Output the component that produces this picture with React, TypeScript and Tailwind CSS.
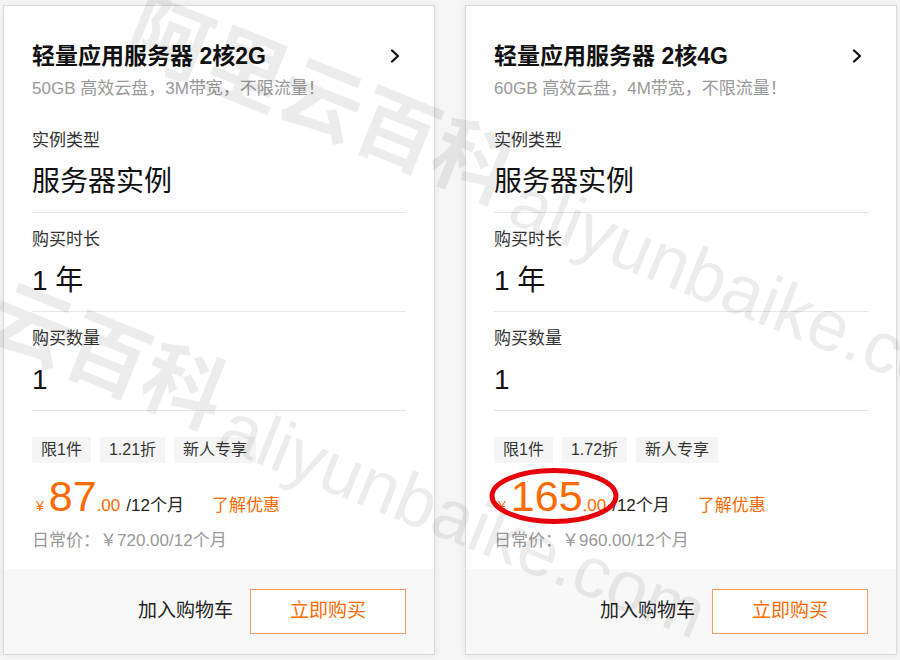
import React from "react";

const FONT = { fontFamily: '"Liberation Sans", "Noto Sans CJK SC", sans-serif' };

type CardProps = {
  title: string;
  sub: string;
  discount: string;
  price: string;
  oldPrice: string;
  circled?: boolean;
};

function Chevron() {
  return (
    <svg width="10" height="14" viewBox="0 0 10 14" className="mr-[6px]">
      <polyline points="2,1.5 8,7 2,12.5" fill="none" stroke="#111" strokeWidth="2.3" strokeLinecap="round" strokeLinejoin="round" />
    </svg>
  );
}

function Card({ title, sub, discount, price, oldPrice, circled }: CardProps) {
  return (
    <div className="relative flex h-[650px] w-[432px] shrink-0 flex-col border border-[#d9d9d9] bg-white shadow-[0_0_8px_rgba(0,0,0,0.07)]">
      <div className="flex flex-col px-[28px] pt-[35px]">
        <div className="flex h-[30px] items-center justify-between">
          <span className="text-[23px] font-semibold leading-[30px] text-[#111]">{title}</span>
          <Chevron />
        </div>
        <div className="mt-[7px] text-[17px] leading-[22px] text-[#999]">{sub}</div>

        <div className="mt-[29px] text-[17px] leading-[24px] text-[#333]">实例类型</div>
        <div className="mt-[11px] text-[28px] leading-[36px] text-[#111]">服务器实例</div>
        <div className="mt-[12px] h-px bg-[#e6e6e6]" />

        <div className="mt-[15px] text-[17px] leading-[24px] text-[#333]">购买时长</div>
        <div className="mt-[11px] text-[28px] leading-[36px] text-[#111]">1 年</div>
        <div className="mt-[12px] h-px bg-[#e6e6e6]" />

        <div className="mt-[15px] text-[17px] leading-[24px] text-[#333]">购买数量</div>
        <div className="mt-[11px] text-[28px] leading-[36px] text-[#111]">1</div>
        <div className="mt-[12px] h-px bg-[#e6e6e6]" />

        <div className="mt-[26px] flex gap-[9px]">
          <span className="flex h-[26px] items-center bg-[#f5f5f5] px-[9px] text-[16px] text-[#333]">限1件</span>
          <span className="flex h-[26px] items-center bg-[#f5f5f5] px-[9px] text-[16px] text-[#333]">{discount}</span>
          <span className="flex h-[26px] items-center bg-[#f5f5f5] px-[9px] text-[16px] text-[#333]">新人专享</span>
        </div>

        <div className="mt-[12px] flex items-baseline">
          <span className="ml-[4px] text-[14px] text-[#ff6a00]">¥</span>
          <span className="ml-[5px] text-[43px] leading-[42px] text-[#ff6a00]">{price}</span>
          <span className="text-[17px] text-[#ff6a00]">.00</span>
          <span className="ml-[6px] text-[17px] leading-[24px] text-[#222]">/12个月</span>
          <span className="ml-[28px] text-[17px] leading-[24px] text-[#ff6a00]">了解优惠</span>
        </div>
        <div className="mt-[10px] text-[17px] leading-[24px] text-[#999]">日常价：￥{oldPrice}/12个月</div>
      </div>

      <div className="mt-auto flex h-[85px] items-center justify-end bg-[#f8f8f8] px-[28px]">
        <span className="mr-[17px] text-[19px] text-[#222]">加入购物车</span>
        <button className="flex h-[45px] w-[156px] items-center justify-center border border-[#ff9a66] bg-white text-[19px] text-[#ff6a00]">
          立即购买
        </button>
      </div>

      {circled && (
        <svg className="pointer-events-none absolute left-[23px] top-[459px] z-20" width="130" height="60" viewBox="0 0 130 60">
          <ellipse cx="65" cy="31" rx="62" ry="25.5" fill="none" stroke="#e8000b" strokeWidth="5" />
        </svg>
      )}
    </div>
  );
}

function Watermark({ left, top }: { left: number; top: number }) {
  return (
    <div
      className="absolute whitespace-nowrap text-black/[0.075]"
      style={{ left, top, transform: "rotate(22deg)", transformOrigin: "0 50%" }}
    >
      <span className="text-[82px] font-bold leading-[80px]" style={{ fontFamily: '"Noto Sans CJK SC", sans-serif' }}>
        阿里云百科
      </span>
      <span className="relative top-[14px] ml-[10px] text-[72px] leading-[80px]" style={{ fontFamily: '"Liberation Sans", sans-serif' }}>
        aliyunbaike.com
      </span>
    </div>
  );
}

export default function App() {
  return (
    <div className="relative h-[660px] w-[900px] overflow-hidden bg-[#f6f6f6]" style={FONT}>
      <div className="flex gap-[30px] pl-[3px] pt-[5px]">
        <Card
          title="轻量应用服务器 2核2G"
          sub="50GB 高效云盘，3M带宽，不限流量！"
          discount="1.21折"
          price="87"
          oldPrice="720.00"
        />
        <Card
          title="轻量应用服务器 2核4G"
          sub="60GB 高效云盘，4M带宽，不限流量！"
          discount="1.72折"
          price="165"
          oldPrice="960.00"
          circled
        />
      </div>
      <div className="pointer-events-none absolute inset-0 z-10 overflow-hidden">
        <Watermark left={132} top={-22} />
        <Watermark left={-158} top={203} />
      </div>
    </div>
  );
}
